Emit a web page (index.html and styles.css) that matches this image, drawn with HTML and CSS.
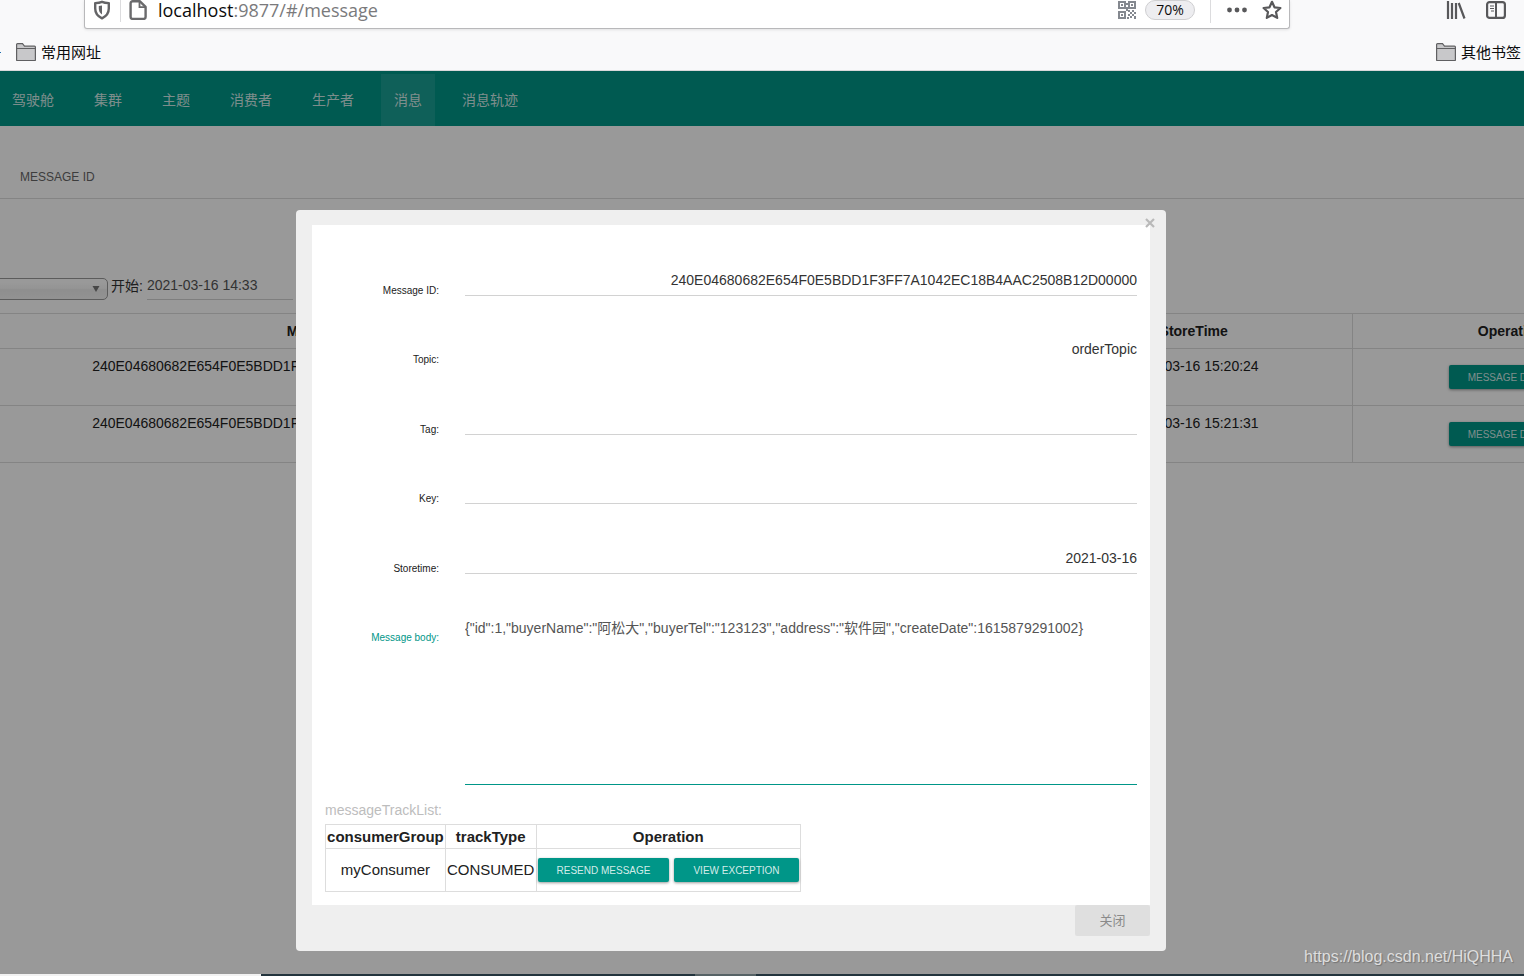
FILE: index.html
```html
<!DOCTYPE html>
<html lang="zh-CN">
<head>
<meta charset="utf-8">
<title>RocketMQ Console</title>
<link rel="stylesheet" href="styles.css">
</head>
<body>
<header class="browser">
  <div class="browser-bar">
    <div class="urlbar">
      <svg class="icon-shield" width="18" height="20" viewBox="0 0 18 20"><path d="M9 1.800c2.300 1 4.500 1.200 6.800 1.300v5.400c0 4.800-2.700 7.900-6.800 9.800-4.100-1.900-6.800-5-6.800-9.800V3.100C4.500 3 6.700 2.800 9 1.800z" fill="none" stroke="#646466" stroke-width="2.400" stroke-linejoin="round"/><path d="M9 5.500v9C6.800 13 5.800 11 5.800 8.500V6z" fill="#646466"/></svg>
      <span class="bar-rule"></span>
      <svg class="icon-page" width="18" height="20" viewBox="0 0 18 20"><path d="M3.500 1.200h7.200L16.600 6.900v10a2 2 0 0 1-2 2h-11a2 2 0 0 1-2-2V3.200a2 2 0 0 1 2-2z" fill="none" stroke="#6a6a6c" stroke-width="2.400" stroke-linejoin="round"/><path d="M10.500 1.500v5.700h5.700" fill="none" stroke="#6a6a6c" stroke-width="1.800"/></svg>
      <span class="url"><b>localhost</b>:9877/#/message</span>
      <svg class="icon-qr" width="18" height="18" viewBox="0 0 18 18" fill="#84888f"><path fill-rule="evenodd" d="M0 0h8v8H0zM2 2v4h4V2zM10 0h8v8h-8zM12 2v4h4V2zM0 10h8v8H0zM2 12v4h4v-4z"/><path d="M3 3h2v2H3zM13 3h2v2h-2zM3 13h2v2H3zM8 2h2v2H8zM8 6h2v2H8zM10 9h2v2h-2zM14 9h2v2h-2zM12 11h2v2h-2zM16 11h2v2h-2zM10 13h2v2h-2zM14 13h2v2h-2zM12 15h2v2h-2zM16 15h2v3h-2zM8 8h2v2H8zM9 16h2v2H9z"/></svg>
      <button class="zoom">70%</button>
      <span class="bar-rule tall"></span>
      <svg class="icon-dots" width="20" height="6" viewBox="0 0 20 6" fill="#58585a"><circle cx="2.500" cy="3" r="2.400"/><circle cx="10" cy="3" r="2.400"/><circle cx="17.500" cy="3" r="2.400"/></svg>
      <svg width="20" height="20" viewBox="0 0 20 20"><path d="M10 1.800l2.500 5.500 5.900.7-4.400 4 1.200 5.900L10 15l-5.200 2.900L6 12 1.600 8l5.900-.7z" fill="none" stroke="#58585a" stroke-width="2.200" stroke-linejoin="round"/></svg>
    </div>
    <div class="tools">
      <svg width="20" height="18" viewBox="0 0 20 18" stroke="#58585a" stroke-width="2.200"><path d="M2 0v18M6 2v16M10 2v16M12.700 2l5.800 15.500"/></svg>
      <svg width="20" height="18" viewBox="0 0 20 18" fill="none" stroke="#58585a"><rect x="1.100" y="1.100" width="17.800" height="15.800" rx="2.500" stroke-width="2.200"/><path d="M10 1v16" stroke-width="2"/><path d="M4 5h4M4 7.500h4M5 10h3" stroke-width="1.200"/></svg>
    </div>
  </div>
  <nav class="bookmarks">
    <a href="#" class="bookmark"><svg width="20" height="18" viewBox="0 0 20 18"><path d="M.6 17V1.600Q.6.7 1.500.7h5l2 2.500h10q.9 0 .9.900V17q0 .5-.6.5H1.200Q.6 17.500.6 17z" fill="#c8c8ca" stroke="#606062" stroke-width="1.200"/><path d="M1 5.500h18" stroke="#606062"/></svg><span>常用网址</span></a>
    <a href="#" class="bookmark"><svg width="20" height="18" viewBox="0 0 20 18"><path d="M.6 17V1.600Q.6.7 1.500.7h5l2 2.500h10q.9 0 .9.900V17q0 .5-.6.5H1.200Q.6 17.500.6 17z" fill="#c8c8ca" stroke="#606062" stroke-width="1.200"/><path d="M1 5.500h18" stroke="#606062"/></svg><span>其他书签</span></a>
  </nav>
</header>

<div class="app">
  <nav class="navbar">
    <a href="#">驾驶舱</a>
    <a href="#">集群</a>
    <a href="#">主题</a>
    <a href="#">消费者</a>
    <a href="#">生产者</a>
    <a href="#" class="active">消息</a>
    <a href="#">消息轨迹</a>
  </nav>
  <div class="tabs"><button class="tab">MESSAGE ID</button></div>
  <div class="filters">
    <div class="topic-picker">
      <select aria-label="Topic"><option></option></select>
      <svg width="8" height="6" viewBox="0 0 8 6"><path d="M0.500 0h7L4 6z" fill="#777"/></svg>
    </div>
    <label for="begin">开始:</label>
    <input id="begin" class="date" type="text" value="2021-03-16 14:33">
  </div>
  <table class="messages">
    <colgroup><col class="c-id"><col class="c-tag"><col class="c-key"><col class="c-time"><col class="c-op"></colgroup>
    <thead><tr><th>Message ID</th><th>Tag</th><th>Key</th><th>StoreTime</th><th>Operation</th></tr></thead>
    <tbody>
      <tr><td>240E04680682E654F0E5BDD1F3FF7A1042EC18B4AAC2508B12D00000</td><td></td><td></td><td>2021-03-16 15:20:24</td><td><button class="btn">MESSAGE DETAIL</button></td></tr>
      <tr><td>240E04680682E654F0E5BDD1F3FF7A1042EC18B4AAC2508B12D00000</td><td></td><td></td><td>2021-03-16 15:21:31</td><td><button class="btn">MESSAGE DETAIL</button></td></tr>
    </tbody>
  </table>

  <div class="backdrop">
    <section class="dialog" role="dialog" aria-label="Message detail">
      <button class="dismiss" aria-label="Close"><svg width="10" height="10" viewBox="0 0 10 10"><path d="M1 1l8 8M9 1L1 9" stroke="#b9b9b9" stroke-width="2.200"/></svg></button>
      <div class="panel">
        <form class="detail">
          <div class="fields">
            <div class="field"><label for="mid">Message ID:</label><input id="mid" type="text" value="240E04680682E654F0E5BDD1F3FF7A1042EC18B4AAC2508B12D00000"></div>
            <div class="field"><label for="topic">Topic:</label><input id="topic" class="bare" type="text" value="orderTopic"></div>
            <div class="field"><label for="tag">Tag:</label><input id="tag" type="text"></div>
            <div class="field"><label for="key">Key:</label><input id="key" type="text"></div>
            <div class="field"><label for="time">Storetime:</label><input id="time" type="text" value="2021-03-16"></div>
          </div>
          <div class="field body-field"><label for="body">Message body:</label><textarea id="body">{"id":1,"buyerName":"阿松大","buyerTel":"123123","address":"软件园","createDate":1615879291002}</textarea></div>
        </form>
        <p class="track-title">messageTrackList:</p>
        <table class="tracks">
          <thead><tr><th>consumerGroup</th><th>trackType</th><th>Operation</th></tr></thead>
          <tbody><tr><td>myConsumer</td><td>CONSUMED</td><td><div class="actions"><button class="btn">RESEND MESSAGE</button><button class="btn">VIEW EXCEPTION</button></div></td></tr></tbody>
        </table>
      </div>
      <footer class="dialog-foot"><button class="close">关闭</button></footer>
    </section>
  </div>
  <span class="watermark">https://blog.csdn.net/HiQHHA</span>
</div>
<div class="taskbar"><span class="search"></span><span class="task"></span></div>
</body>
</html>
```
FILE: styles.css
```css
* { box-sizing: border-box; }
body {
  margin: 0;
  min-height: 100vh;
  display: flex;
  flex-direction: column;
  overflow: hidden;
  background: #fff;
  color: #212121;
  font: 14px/18px "Liberation Sans", "Noto Sans CJK SC", sans-serif;
}
button, input, textarea, select { font: inherit; color: inherit; margin: 0; }
a { color: inherit; text-decoration: none; }
svg { display: block; flex: none; }

.browser {
  height: 71px;
  background: #f9f9fa;
  border-bottom: 1px solid #d8d8da;
  color: #0c0c0d;
}
.browser-bar { display: flex; height: 29px; padding-left: 84px; }
.urlbar {
  flex: 1;
  display: flex;
  align-items: center;
  padding: 0 7px 8px 8px;
  background: #fff;
  border: 1px solid #b8b8ba;
  border-top: 0;
  border-radius: 0 0 3px 3px;
  box-shadow: 0 1px 3px rgba(0, 0, 0, .1);
}
.bar-rule { width: 1px; height: 24px; margin: 0 8px 0 9px; background: #dcdcde; }
.bar-rule.tall { height: 26px; margin: 0 16px 0 15px; }
.url { flex: 1; margin-left: 11px; color: #7a7a7c; font: 18px/24px "Open Sans", sans-serif; white-space: nowrap; }
.url b { font-weight: 400; color: #0c0c0d; }
.icon-dots { margin-right: 15px; }
.zoom {
  width: 50px;
  height: 20px;
  margin-left: 9px;
  padding: 0;
  border: 1px solid #cfcfd1;
  border-radius: 10px;
  background: #ededf0;
  font: 14px/16px "Open Sans", sans-serif;
}
.tools { width: 234px; display: flex; justify-content: flex-end; align-items: center; gap: 20px; padding: 0 18px 9px 0; }
.bookmarks {
  display: flex;
  justify-content: space-between;
  padding: 13px 3px 0 0;
  font: 15px/20px "Noto Sans CJK SC", sans-serif;
}
.bookmarks::before { content: ""; width: 1px; height: 1px; margin: 10px 15px 0 0; background: #1f6fb0; }
.bookmark { display: flex; align-items: center; gap: 5px; }
.bookmark:last-child { margin-left: auto; }

.app { flex: 1; position: relative; overflow: hidden; }
.navbar {
  display: flex;
  gap: 14px;
  height: 55px;
  margin-left: -1px;
  padding-top: 3px;
  background: #009688;
  color: rgba(255, 255, 255, .84);
}
.navbar a { padding: 0 13px; line-height: 52px; }
.navbar .active { background: rgba(255, 255, 255, .1); }
.tabs { height: 73px; padding: 42px 20px 0; border-bottom: 1px solid #ddd; }
.tab { padding: 0; border: 0; background: none; color: #666; font-size: 12px; line-height: 18px; display: block; }

.filters { display: flex; align-items: center; padding-top: 72px; margin-bottom: 13px; color: #333; }
.topic-picker { position: relative; align-self: flex-end; width: 113px; margin-left: -5px; margin-right: 3px; }
.topic-picker select {
  appearance: none;
  display: block;
  width: 100%;
  height: 22px;
  border: 1px solid #999;
  border-radius: 5px;
  background: linear-gradient(#fff 20%, #f6f6f6 50%, #eee 52%, #f4f4f4);
}
.topic-picker svg { position: absolute; right: 8px; top: 8px; }
.date {
  width: 146px;
  height: 29px;
  margin-left: 4px;
  padding: 0;
  border: 0;
  border-bottom: 1px solid #d2d2d2;
  background: none;
  color: #555;
}

table { border-collapse: collapse; }
.messages { table-layout: fixed; width: calc(100% + 146px); text-align: center; }
.c-id { width: 39%; }
.c-tag { width: 12%; }
.c-key { width: 11%; }
.c-time, .c-op { width: 19%; }
.messages th, .messages td { padding: 8px 0; border: solid #ddd; border-width: 1px 1px 1px 0; vertical-align: top; }
.messages .btn { margin: 8px auto; }

.btn {
  display: block;
  height: 24px;
  padding: 0 19px;
  border: 0;
  border-radius: 2px;
  background: #009688;
  box-shadow: 0 1px 3px rgba(0, 0, 0, .4);
  color: rgba(255, 255, 255, .84);
  font-size: 10px;
  line-height: 26px;
  white-space: nowrap;
}

.backdrop {
  position: absolute;
  inset: 0;
  display: flex;
  justify-content: center;
  align-items: flex-start;
  padding: 139px 62px 0 0;
  background: rgba(0, 0, 0, .4);
}
.dialog {
  position: relative;
  width: 870px;
  padding: 15px 16px;
  border-radius: 4px;
  background: #efefef;
}
.dismiss { position: absolute; top: 8px; right: 11px; padding: 0; border: 0; background: none; }
.panel { padding: 1px 13px 13px; background: #fff; }
.fields { display: grid; grid-template-rows: repeat(5, 1fr); height: 348px; }
.field { display: grid; grid-template-columns: 114px 1fr; column-gap: 26px; align-items: end; }
.field label { font-size: 10px; line-height: 10px; text-align: right; }
.field input, .field textarea {
  display: block;
  width: 100%;
  padding: 0;
  border: 0;
  border-bottom: 1px solid #d2d2d2;
  background: none;
  color: #333;
}
.field input { height: 31px; text-align: right; }
.field .bare { border-color: transparent; }
.body-field { align-items: start; height: 211px; }
.body-field label { margin-top: 59px; color: #009688; }
.field textarea { height: 166px; margin-top: 45px; border-color: #009688; color: #555; resize: none; overflow: hidden; }
.track-title { margin: 15px 0 4px; line-height: 20px; color: #bdbdbd; }
.tracks { width: 476px; font-size: 15px; text-align: center; }
.tracks th, .tracks td { border: 1px solid #ddd; padding: 0 1px; }
.tracks th { height: 24px; }
.tracks td { height: 43px; }
.actions { display: flex; gap: 5px; }
.dialog-foot { display: flex; justify-content: flex-end; }
.close {
  width: 75px;
  height: 31px;
  padding: 0;
  border: 0;
  border-radius: 2px;
  background: #dfdfdf;
  color: #8a8a8a;
  font-size: 13px;
}
.watermark {
  position: absolute;
  right: 11px;
  bottom: 8px;
  color: #dedede;
  font-size: 16px;
  text-shadow: 1px 1px 1px rgba(0, 0, 0, .25);
}
.taskbar { display: flex; height: 2px; background: #22343d; }
.search { width: 261px; background: #f2f2f2; }
.task { width: 61px; margin-left: 434px; background: #566265; }
```
